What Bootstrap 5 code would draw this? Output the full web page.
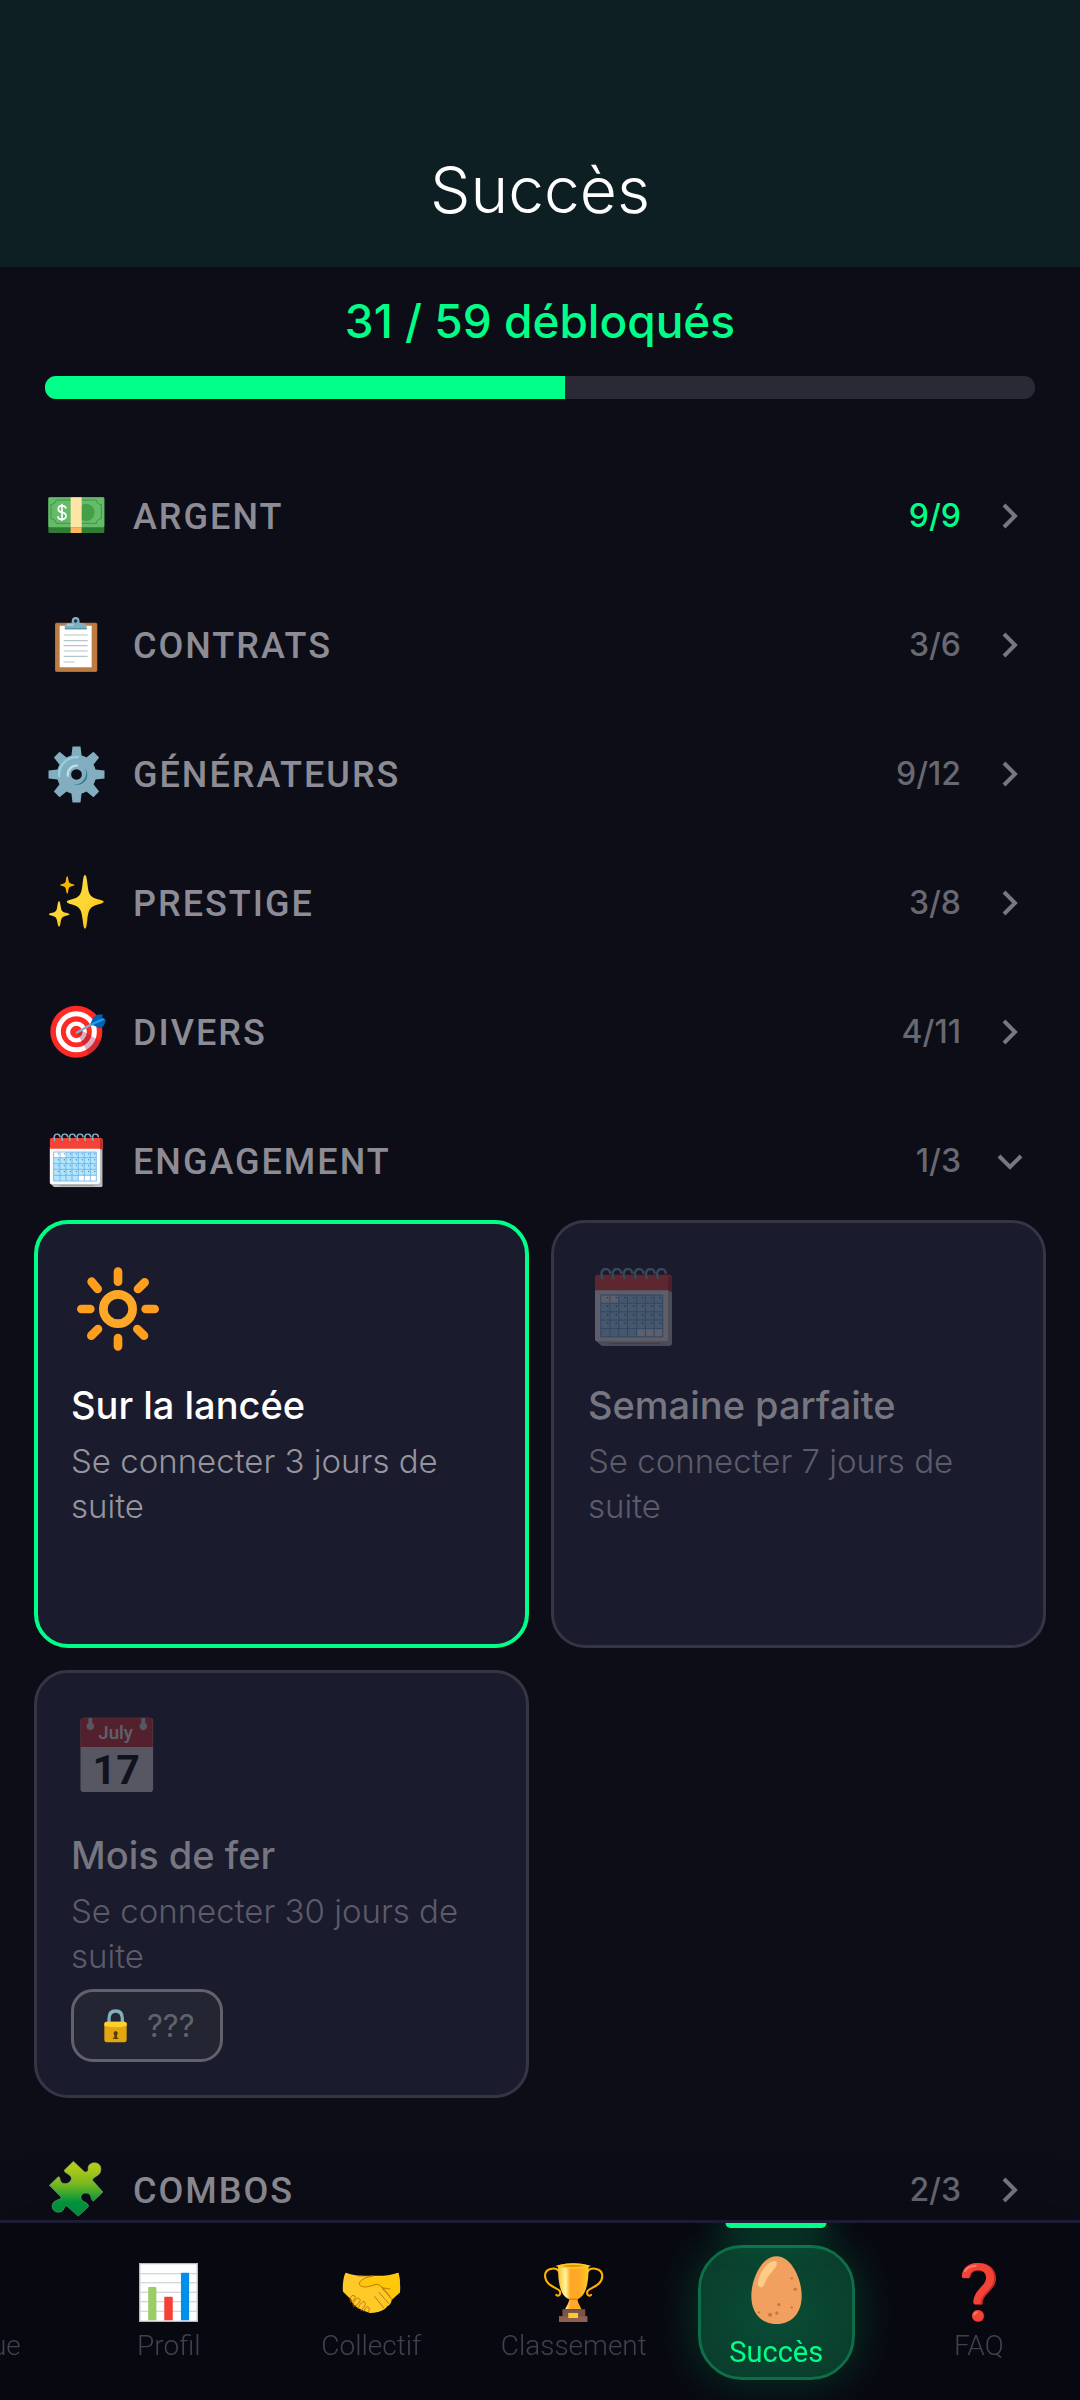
<!DOCTYPE html>
<html lang="fr">
<head>
<meta charset="utf-8">
<meta name="viewport" content="width=device-width, initial-scale=1">
<title>Succès</title>
<link rel="stylesheet" href="https://cdn.jsdelivr.net/npm/bootstrap@5.3.0/dist/css/bootstrap.min.css">
<style>
  :root { --neon: #00ff88; --page: #0c0d17; --tile: #1a1b2d; }
  body { background: var(--page); color: #fff; font-family: Inter, "Noto Sans", sans-serif; padding-bottom: 180px; }
  svg { display: block; overflow: visible; flex: none; }
  .top-bar { background: #0d1f22; padding: 154px 45px 41px; }
  .top-bar h1 { font-size: 64px; line-height: 72px; font-weight: 300; }
  .tally { padding: 27px 45px 0; }
  .tally-text { color: var(--neon); font-size: 46px; line-height: 54px; font-weight: 500; margin-bottom: 28px; }
  .tally .progress { height: 23px; border-radius: 11px; background: #2a2a36; margin-bottom: 58px; }
  .tally .progress-bar { background: var(--neon); }
  .group { margin-bottom: 11px; }
  .group-btn { height: 118px; padding: 0 48px; background: none; border: 0; color: #8d8c94; }
  .group-btn svg { width: 57px; height: 57px; }
  .group-name { font-family: Roboto, sans-serif; font-size: 36px; line-height: 44px; font-weight: 500; letter-spacing: 2px; margin-left: 28px; padding-top: 2px; }
  .group-count { font-size: 32px; line-height: 44px; font-weight: 500; color: #686871; }
  .group-count.full { color: var(--neon); }
  .group-btn .chev { width: 44px; height: 44px; margin-left: 27px; fill: none; stroke: #77777f; stroke-width: 4; }
  .tiles { padding: 0 34px 22px; }
  .tiles .row { --bs-gutter-x: 22px; --bs-gutter-y: 22px; margin-top: 0; }
  .feat { min-height: 428px; background: var(--tile); border: 3px solid #363546; border-radius: 34px; padding: 44px 34px 33px; }
  .feat svg { width: 84px; height: 84px; margin: 0 0 30px 5px; opacity: .3; }
  .feat h2 { font-size: 38px; line-height: 48px; font-weight: 500; color: #767680; margin-bottom: 10px; }
  .feat p { font-size: 33px; line-height: 45px; font-weight: 300; color: #5c5b69; margin-bottom: 10px; }
  .feat.won { border: 4px solid var(--neon); padding: 43px 33px 32px; }
  .feat.won svg { opacity: 1; }
  .feat.won h2 { color: #fff; }
  .feat.won p { color: #96959e; }
  .secret { height: 73px; border: 3px solid #62626d; border-radius: 22px; background: #242533; color: #62626d; font-size: 31px; line-height: 40px; padding: 0 25px 0 30px; gap: 20px; }
  .feat .secret svg { width: 23px; height: 34px; margin: 0; opacity: 1; }
  .dock { background: #080811; border-top: 3px solid #1e1c35; box-shadow: 0 -6px 50px rgba(0, 0, 0, .25); height: 180px; overflow: hidden; }
  .dock-item { flex: 0 0 18.75%; font-family: Roboto, sans-serif; font-size: 28px; line-height: 34px; font-weight: 300; color: #41404f; text-decoration: none; padding: 22px 0 20px; position: relative; }
  .dock-item svg { width: 59px; height: 59px; margin-bottom: 7px; }
  .dock-item.active { color: var(--neon); font-weight: 400; font-size: 29px; }
  .dock-item.active svg { width: 51px; height: 68px; margin-bottom: 11px; }
  .dock-item.active .pill { width: 157px; border: 3px solid #0d6e48; border-radius: 44px; background: radial-gradient(#094e36, #0a3a2a); box-shadow: 0 0 50px rgba(0, 255, 136, .2); }
  .dock-item.active::before { content: ""; position: absolute; top: 0; left: 50%; width: 101px; height: 5px; transform: translateX(-50%); background: var(--neon); border-radius: 0 0 6px 6px; box-shadow: 0 0 34px 2px rgba(0, 255, 136, .6); }
</style>
</head>
<body>
<svg width="0" height="0" class="position-absolute" aria-hidden="true">
  <defs>
    <linearGradient id="star" x1="0" y1="0" x2="1" y2="1"><stop offset=".5" stop-color="#fdd835"/><stop offset="1" stop-color="#f4b400"/></linearGradient>
    <linearGradient id="jig" x1="0" y1="0" x2="0" y2="1"><stop offset=".1" stop-color="#b5cc18"/><stop offset=".4" stop-color="#7fbf20"/><stop offset=".75" stop-color="#00a043"/></linearGradient>
    <linearGradient id="cup" x1="0" y1="0" x2="1" y2="0"><stop offset="0" stop-color="#fbc02d"/><stop offset=".25" stop-color="#fff59d"/><stop offset=".4" stop-color="#ffa726"/><stop offset=".65" stop-color="#ffa726"/><stop offset="1" stop-color="#ffca28"/></linearGradient>
    <symbol id="planner" viewBox="0 0 159 162" preserveAspectRatio="none">
      <path d="M5 18h154v138q0 6-6 6H14L0 150V50z" fill="#bdbdbd"/>
      <path d="M0 40h151v106q0 6-6 6H6q-6 0-6-6z" fill="#fafafa"/>
      <path d="M5 14h148q6 0 6 6v30l-8-4H0V20q0-6 5-6z" fill="#f44336"/><path d="M151 16q8 0 8 6v28l-8-4z" fill="#c62828"/>
      <path d="M12 56h128v87H12z" fill="#b3e5fc"/><path d="M12 56h37v17H12zM86 126h54v17H86z" fill="#fff"/>
      <path d="M12 56h128v87H12zM12 73h128M12 91h128M12 108h128M12 126h128M31 56v87M49 56v87M67 56v87M86 56v87M104 56v87M122 56v87" fill="none" stroke="#5aa5e0" stroke-width="2"/>
      <path d="M26 60v3M44 60v3M62 60v3M80 60v3M98 60v3M117 60v3M135 60v3M26 78v3M44 78v3M62 78v3M80 78v3M98 78v3M117 78v3M135 78v3M26 96v3M44 96v3M62 96v3M80 96v3M98 96v3M117 96v3M135 96v3M26 113v3M44 113v3M62 113v3M80 113v3M98 113v3M117 113v3M135 113v3" stroke="#1e78c8" stroke-width="3"/>
      <path d="M30 157h104" stroke="#888" stroke-width="2"/>
      <path d="M15 21c-4-11 0-19 7-19s8 3 9 8M38 21c-4-11 0-19 7-19s8 3 9 8M61 21c-4-11 0-19 7-19s8 3 9 8M84 21c-4-11 0-19 7-19s8 3 9 8M107 21c-4-11 0-19 7-19s8 3 9 8M130 21c-4-11 0-19 7-19s8 3 9 8" fill="none" stroke="#82aec0" stroke-width="5" stroke-linecap="round"/>
    </symbol>
  </defs>
</svg>

<header class="top-bar text-center"><h1 class="mb-0">Succès</h1></header>

<main>
  <section class="tally text-center">
    <div class="tally-text">31 / 59 débloqués</div>
    <div class="progress" role="progressbar" aria-label="Succès débloqués" aria-valuenow="31" aria-valuemin="0" aria-valuemax="59"><div class="progress-bar" style="width:52.54%"></div></div>
  </section>

  <section class="group">
    <button type="button" class="group-btn d-flex align-items-center w-100 text-start">
      <svg viewBox="145 80 171 171"><rect x="146" y="108" width="168" height="107" rx="4" fill="#2e7d32"/><rect x="146" y="108" width="168" height="90" rx="4" fill="#66bb6a"/><path d="M170 116h120q0 12 15 14v42q-14 2-15 14H170q-2-12-16-14v-42q14-2 16-14z" fill="none" stroke="#388e3c" stroke-width="2.500"/><circle cx="259" cy="153" r="26" fill="#43a047"/><path d="M213 108h33v90h-33z" fill="#ffe5a5"/><path d="M213 198h33v17h-33z" fill="#ffb75c"/><path d="M199 142q-2-9-12-9t-11 9 11 11 12 11-12 10-12-9M187 127v52" fill="none" stroke="#fff" stroke-width="5"/></svg>
      <span class="group-name">ARGENT</span><span class="group-count full ms-auto">9/9</span>
      <svg class="chev" viewBox="0 0 44 44"><path d="M16 11l11 11-11 11"/></svg>
    </button>
  </section>

  <section class="group">
    <button type="button" class="group-btn d-flex align-items-center w-100 text-start">
      <svg viewBox="145 467 171 171"><rect x="166" y="484" width="127" height="148" rx="5" fill="#ad6b38"/><rect x="168" y="486" width="123" height="143" rx="4" fill="#bd7b42"/><path d="M180 493h96v125h-96z" fill="#fff"/><path d="M192 521h72M192 538h72M192 553h72M192 569h72M192 585h72M192 602h33" stroke="#b4c4cc" stroke-width="3.500"/><path d="M195 504v-9q1-9 12-10h9c0-12 2-18 12-18s12 6 12 18h9q11 1 12 10v9z" fill="#82aec0"/><path d="M196 500h65v4h-65z" fill="#5c93a8"/><circle cx="228" cy="479" r="5" fill="#16303c"/><path d="M202 491h20" stroke="#b9e4ea" stroke-width="3"/></svg>
      <span class="group-name">CONTRATS</span><span class="group-count ms-auto">3/6</span>
      <svg class="chev" viewBox="0 0 44 44"><path d="M16 11l11 11-11 11"/></svg>
    </button>
  </section>

  <section class="group">
    <button type="button" class="group-btn d-flex align-items-center w-100 text-start">
      <svg viewBox="-85.500 -85.500 171 171"><g fill="#82aec0"><g id="teeth"><path d="M-12-84h24l4 34h-32zM-12 84h24l4-34h-32z"/><path d="M-84-12v24l34 4v-32zM84-12v24l-34 4v-32z"/></g><use href="#teeth" transform="rotate(45)"/><path fill-rule="evenodd" d="M0-59a59 59 0 1 0 .1 0zM0-16a16 16 0 1 1-.1 0z"/></g><path d="M-52 6A53 53 0 0 1 4-52" fill="none" stroke="#94d1e0" stroke-width="7" stroke-linecap="round"/><path d="M-26 4A27 27 0 0 1 2-27" fill="none" stroke="#b9e4ea" stroke-width="6" stroke-linecap="round"/><path d="M26-18A34 34 0 0 1-16 28C22 42 44 6 26-18" fill="#2f7889"/></svg>
      <span class="group-name">GÉNÉRATEURS</span><span class="group-count ms-auto">9/12</span>
      <svg class="chev" viewBox="0 0 44 44"><path d="M16 11l11 11-11 11"/></svg>
    </button>
  </section>

  <section class="group">
    <button type="button" class="group-btn d-flex align-items-center w-100 text-start">
      <svg viewBox="145 104 171 171"><path d="M256 104c4 0 5 10 7 24 4 38 8 43 40 51 12 3 12 8 0 11-32 8-36 15-40 48-2 16-3 27-7 27s-5-11-7-27c-4-33-8-40-40-48-10-3-10-8 0-11 32-8 36-13 40-51 2-14 3-24 7-24z" fill="url(#star)"/><path d="M178 183c3 0 3 5 5 14 2 17 5 18 22 22 6 2 6 4 0 6-16 4-20 6-22 21-2 9-2 13-5 13s-3-4-5-13c-2-15-5-17-21-21-6-2-6-4 0-6 16-4 19-5 21-22 2-9 2-14 5-14z" fill="url(#star)"/><path d="M203 108c2 0 2 4 3 9 2 11 3 12 15 15 5 1 5 3 0 4-12 3-13 4-15 14-1 6-1 10-3 10s-3-4-4-10c-1-10-3-11-14-14-5-1-5-3 0-4 11-3 13-4 14-15 1-5 2-9 4-9z" fill="#f4b400"/></svg>
      <span class="group-name">PRESTIGE</span><span class="group-count ms-auto">3/8</span>
      <svg class="chev" viewBox="0 0 44 44"><path d="M16 11l11 11-11 11"/></svg>
    </button>
  </section>

  <section class="group">
    <button type="button" class="group-btn d-flex align-items-center w-100 text-start">
      <svg viewBox="145 491 171 171"><circle cx="230" cy="574" r="78" fill="#ff2a23"/><circle cx="230" cy="574" r="54" fill="none" stroke="#fff" stroke-width="15"/><circle cx="230" cy="575" r="25" fill="none" stroke="#fff" stroke-width="13"/><path d="M232 577l16-6 54 32q-8 24-35 38z" fill="#8e1c4a" opacity=".35"/><path d="M231 577l50-28" stroke="#82aec0" stroke-width="7" stroke-linecap="round"/><path d="M272 551l9-20q12-12 29-8l-3 10 11 3q0 20-17 28z" fill="#0062b2"/><path d="M274 553l38-17" stroke="#1e9bf0" stroke-width="7"/></svg>
      <span class="group-name">DIVERS</span><span class="group-count ms-auto">4/11</span>
      <svg class="chev" viewBox="0 0 44 44"><path d="M16 11l11 11-11 11"/></svg>
    </button>
  </section>

  <section class="group">
    <button type="button" class="group-btn d-flex align-items-center w-100 text-start" aria-expanded="true" aria-controls="engagement">
      <svg viewBox="145 878 171 171"><use href="#planner" x="150" y="879" width="159" height="162"/></svg>
      <span class="group-name">ENGAGEMENT</span><span class="group-count ms-auto">1/3</span>
      <svg class="chev" viewBox="0 0 44 44"><path d="M11 17l11 11 11-11"/></svg>
    </button>
    <div class="tiles" id="engagement">
      <div class="row row-cols-2">
        <div class="col mt-0">
          <article class="feat won">
            <svg viewBox="-126 -126 252 252"><circle r="44" fill="none" stroke="#ffa726" stroke-width="26"/><g stroke="#ff9d1c" stroke-width="26" stroke-linecap="round"><path d="M0-112v30M0 112v-25M-110 0h27M110 0h-27M-79-82l18 22M80-80l-20 20M-80 80l20-20M78 80l-20-20"/></g></svg>
            <h2>Sur la lancée</h2><p>Se connecter 3 jours de suite</p>
          </article>
        </div>
        <div class="col mt-0">
          <article class="feat">
            <svg viewBox="0 0 84 84"><use href="#planner" x="2" y="1" width="77" height="78"/></svg>
            <h2>Semaine parfaite</h2><p>Se connecter 7 jours de suite</p>
          </article>
        </div>
        <div class="col">
          <article class="feat">
            <svg viewBox="220 201 244 252" preserveAspectRatio="none"><rect x="233" y="203" width="211" height="223" rx="10" fill="#e0e0e0"/><path d="M233 291v-78q0-10 10-10h13v15a11 12 0 1 0 11 0v-15h143v15a11 12 0 1 0 11 0v-15h12q10 0 10 10v78z" fill="#d32f2f"/><text x="335" y="266" text-anchor="middle" font-family="Roboto, sans-serif" font-weight="500" font-size="54" fill="#fff">July</text><text x="337" y="402" text-anchor="middle" font-family="Roboto, sans-serif" font-weight="700" font-size="120" fill="#000">17</text></svg>
            <h2>Mois de fer</h2><p>Se connecter 30 jours de suite</p>
            <span class="secret d-inline-flex align-items-center">
              <svg viewBox="0 0 69 102"><path d="M15 46V29q0-23 20-23t20 23v17" fill="none" stroke="#82aec0" stroke-width="10"/><rect x="1" y="38" width="67" height="62" rx="7" fill="#e2a610"/><path d="M1 50v-6q0-6 7-6h53q7 0 7 6v6q-32 10-67 0z" fill="#ffd02f"/><path d="M35 66a7 7 0 0 1 4 12v8h4v4H27v-4h4v-8a7 7 0 0 1 4-12z" fill="#5a3c0a"/></svg>
              <span>???</span>
            </span>
          </article>
        </div>
      </div>
    </div>
  </section>

  <section class="group">
    <button type="button" class="group-btn d-flex align-items-center w-100 text-start">
      <svg viewBox="139 128 166 171" preserveAspectRatio="none"><path d="M213 126l32 31q10 4 11-8c-3-24 37-26 37-1 2 21-20 23-24 32-1 4 3 7 6 10l24 28-27 27c-7 1-6-9-10-17-6-11-27-8-27 6 0 16 22 12 22 28l-30 29-29-27c-10-10-10 0-14 8-10 12-33 8-33-12 0-18 24-18 26-24 0-5-5-7-9-12l-25-26 26-26c6 0 4 8 8 15 9 12 30 4 30-10-1-13-21-14-21-24z" fill="url(#jig)" stroke="#86b590" stroke-width="1.500"/></svg>
      <span class="group-name">COMBOS</span><span class="group-count ms-auto">2/3</span>
      <svg class="chev" viewBox="0 0 44 44"><path d="M16 11l11 11-11 11"/></svg>
    </button>
  </section>
</main>

<nav class="dock fixed-bottom d-flex justify-content-end">
  <a href="#" class="dock-item d-flex justify-content-center"><span class="pill d-flex flex-column align-items-center justify-content-center"><svg viewBox="0 0 59 59"><path d="M4 24h51v32H4z" fill="#90a4ae"/><path d="M2 6h55l2 20H0z" fill="#f44336"/></svg>Boutique</span></a>
  <a href="#" class="dock-item d-flex justify-content-center"><span class="pill d-flex flex-column align-items-center justify-content-center"><svg viewBox="402 426 173 177" preserveAspectRatio="none"><path d="M404 428h169v173H404z" fill="#fff" stroke="#b0bec5" stroke-width="4"/><path d="M406 458h167M406 485h167M406 514h167M406 542h167M406 571h167" stroke="#c4cdd2" stroke-width="3"/><path d="M429 598V501q0-3 3-3h18q3 0 3 3v97z" fill="#9ccc65"/><path d="M476 598v-68q0-3 3-3h19q3 0 3 3v68z" fill="#f44336"/><path d="M525 598V458q0-3 3-3h18q3 0 3 3v140z" fill="#0090ea"/></svg>Profil</span></a>
  <a href="#" class="dock-item d-flex justify-content-center"><span class="pill d-flex flex-column align-items-center justify-content-center"><svg viewBox="993 427 171 177" preserveAspectRatio="none"><path d="M1004 456c-7 8-10 40-8 57q14 14 24 24l2 8q10 18 42 28l10 4 12-1 14-3q20-6 24-16 12-6 13-20l24-22c2-19-1-49-5-59-28 10-50 10-76 9-26 2-50 1-76-9z" fill="#ffca28"/><path d="M1156 456c4 10 7 40 5 59l-24 22-30-36-34-1c-12 2-30-3-30-10 10-16 30-20 40-22 26 3 49-1 73-12z" fill="#ffc80a"/><path d="M1082 466c-12 3-36 8-39 23-1 9 18 12 29 8l20-6c14 0 24 14 44 44M1040 466h40M1110 505l22 22M1100 515l28 33M1088 528l26 34M1017 540q-2-12 8-16 8 0 6 10-10 10-14 11M1025 554q0-14 14-22 10 2 5 12-8 12-17 14M1040 564q2-14 16-22 8 4 2 16l-10 12M1056 572q2-8 10-14 10 2 4 16M1108 501l24 4" fill="none" stroke="#b56a12" stroke-width="2.500" stroke-linecap="round"/></svg>Collectif</span></a>
  <a href="#" class="dock-item d-flex justify-content-center"><span class="pill d-flex flex-column align-items-center justify-content-center"><svg viewBox="10 427 173 176" preserveAspectRatio="none"><path d="M54 452c-10-14-42-10-41 14 2 32 40 34 44 46 3 10-6 16-11 10M138 452c10-14 43-10 43 14-2 32-40 34-44 46-3 10 6 16 11 10" fill="none" stroke="#ffb300" stroke-width="6" stroke-linecap="round"/><path d="M51 434c0 50 6 92 33 101-2 14-8 20-12 30h48c-4-10-10-16-12-30 27-9 33-51 33-101q-44-12-90 0z" fill="url(#cup)"/><path d="M51 436q44-12 90 0-44 12-90 0z" fill="#e59600" stroke="#ffc928" stroke-width="4"/><path d="M84 535h24" stroke="#e08a00" stroke-width="5"/><path d="M64 565h67v20h6v18H54v-18h10z" fill="#795548"/><path d="M54 587h83v16H54z" fill="#8d6053"/><path d="M81 576h29v15H81z" fill="#ffc928"/></svg>Classement</span></a>
  <a href="#" class="dock-item active d-flex justify-content-center" aria-current="page"><span class="pill d-flex flex-column align-items-center justify-content-center"><svg viewBox="612 404 150 204" preserveAspectRatio="none"><path d="M687 405c44 0 74 68 74 119 0 53-30 84-74 84s-74-31-74-84c0-51 30-119 74-119z" fill="#f2a05f"/><path d="M676 420c14-4 15 8 8 18-16 22-26 30-34 54-4 10-18 8-18-6 2-26 22-58 44-66z" fill="#ffcc88"/><g fill="#cc7548"><circle cx="668" cy="580" r="6"/><circle cx="688" cy="575" r="5"/><circle cx="694" cy="550" r="5"/><circle cx="742" cy="504" r="5"/><circle cx="732" cy="471" r="3.500"/><circle cx="732" cy="558" r="3.500"/><circle cx="635" cy="573" r="3.500"/></g></svg>Succès</span></a>
  <a href="#" class="dock-item d-flex justify-content-center"><span class="pill d-flex flex-column align-items-center justify-content-center"><svg viewBox="775 142 177 177"><path d="M816 186c-4-22 14-44 48-44 32 0 52 18 52 46 0 36-38 44-40 76q0 3-4 3h-18q-6 0-5-6c2-40 38-48 38-74 0-16-10-22-24-22-16 0-22 8-24 20q-1 3-5 3h-14q-4 0-4-2z" fill="#c62828"/><path d="M814 184c-2-24 18-42 46-42 30 0 50 18 50 44 0 36-38 44-40 76q0 3-3 3h-15q-4 0-4-5c2-40 38-48 38-74 0-16-10-23-25-23-16 0-23 8-25 21q-1 3-4 3h-14q-4 0-4-3z" fill="#f44336"/><circle cx="863" cy="301" r="18" fill="#c62828"/><circle cx="861" cy="300" r="17" fill="#f44336"/><path d="M823 166q8-14 32-16M851 296q2-6 8-6" fill="none" stroke="#ff7569" stroke-width="6" stroke-linecap="round"/></svg>FAQ</span></a>
</nav>
<script src="https://cdn.jsdelivr.net/npm/bootstrap@5.3.0/dist/js/bootstrap.bundle.min.js"></script>
</body>
</html>
